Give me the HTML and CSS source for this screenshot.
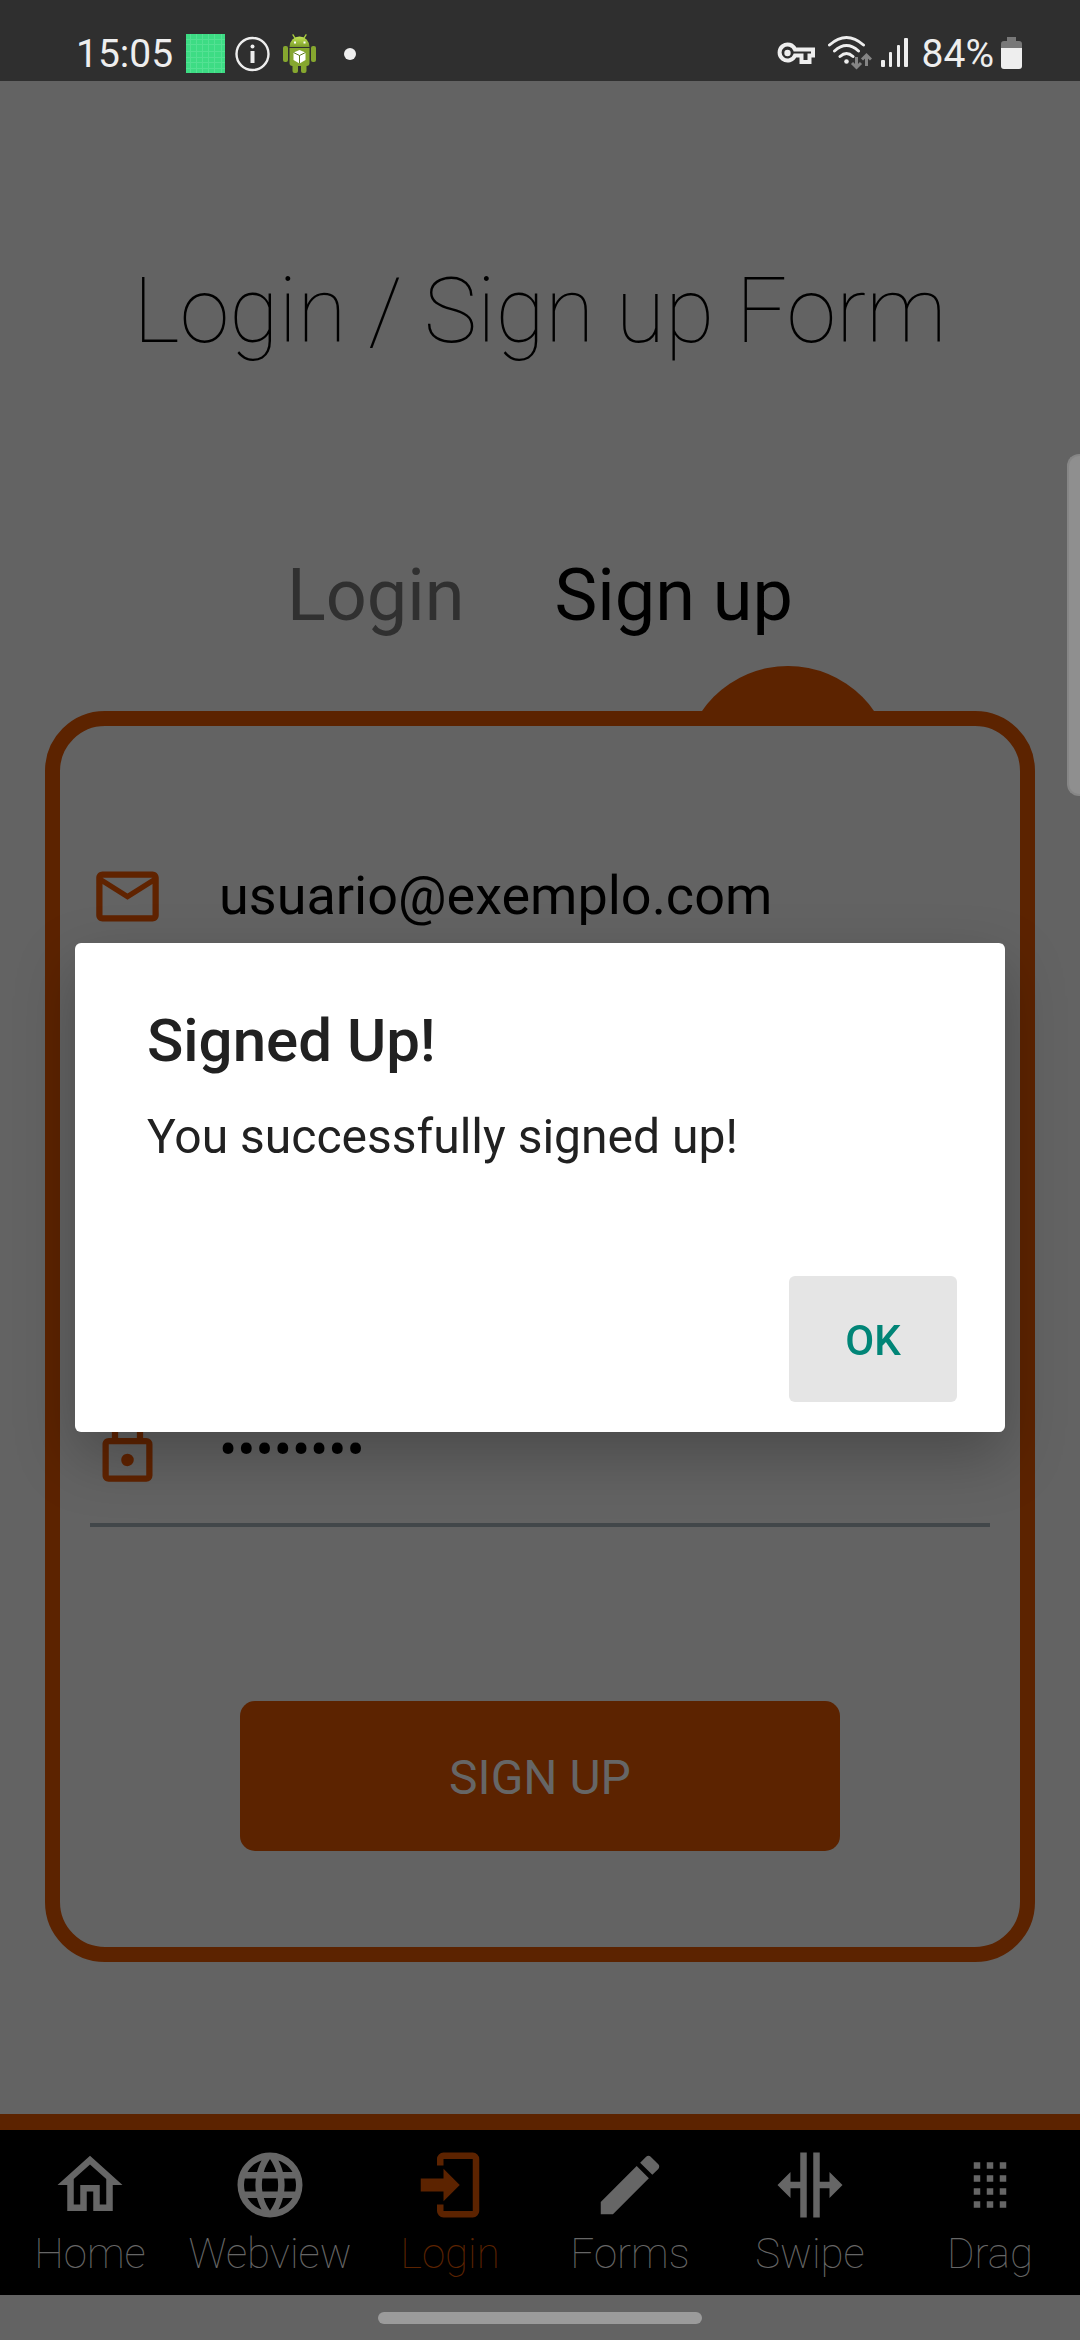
FILE: index.html
```html
<!DOCTYPE html>
<html lang="en">
<head>
<meta charset="utf-8">
<meta name="viewport" content="width=device-width, initial-scale=1">
<title>Login / Sign up Form</title>
<link rel="stylesheet" href="styles.css">
</head>
<body>
<header class="status">
  <div class="status-group">
    <span class="status-text">15:05</span>
    <div class="notices">
      <svg width="39" height="39" viewBox="0 0 39 39" aria-hidden="true">
        <path fill="#3ddc84" d="M0 0h39v39H0z"/>
        <path stroke="#6ae6a2" stroke-width="1" opacity=".5" d="M4.500 0v39M10.500 0v39M16.500 0v39M22.500 0v39M28.500 0v39M35.500 0v39M0 5.500h39M0 10.500h39M0 17.500h39M0 23.500h39M0 28.500h39M0 34.500h39"/>
      </svg>
      <svg width="39" height="39" viewBox="0 0 39 39" aria-hidden="true">
        <circle cx="19.500" cy="20" r="16" fill="none" stroke="#eee" stroke-width="2.400"/>
        <circle cx="19.500" cy="12.500" r="2" fill="#eee"/>
        <path fill="#eee" d="M17.500 17h4v12h-4z"/>
      </svg>
      <svg width="39" height="39" viewBox="0 0 39 39" aria-hidden="true">
        <defs>
          <linearGradient id="droid" x1="0" y1="0" x2="0" y2="1">
            <stop offset="0" stop-color="#c3e553"/><stop offset="1" stop-color="#7b9c2a"/>
          </linearGradient>
        </defs>
        <path stroke="#a9cf3e" stroke-width="1.300" stroke-linecap="round" d="M13 .8l2 3.400M26 .8l-2 3.400"/>
        <path fill="url(#droid)" d="M9.500 13a10 10.500 0 0 1 20 0z"/>
        <g fill="#86a72f">
          <rect x="3" y="12" width="5" height="16" rx="2"/>
          <rect x="31" y="12" width="5" height="16" rx="2"/>
          <rect x="12.500" y="29" width="5.500" height="10" rx="2"/>
          <rect x="21" y="29" width="5.500" height="10" rx="2"/>
          <path d="M9.500 14h20v15q0 3-3 3h-14q-3 0-3-3z"/>
        </g>
        <path fill="#fff" d="M14 7.500h2v2h-2zM23.500 7.500h2v2h-2z"/>
        <path fill="#fff" d="M19.500 16l6 2.500v7.500l-6 3.500-6-3.500v-7.500z"/>
        <path fill="none" stroke="#5d7a1e" stroke-width="1" d="M13.500 18.500l6 3 6-3M19.500 21.500v8"/>
      </svg>
    </div>
    <svg class="more" width="12" height="12" viewBox="0 0 12 12" aria-hidden="true"><circle cx="6" cy="6" r="6" fill="#eee"/></svg>
  </div>
  <div class="status-group status-end">
    <svg width="38" height="39" viewBox="0 0 38 39" aria-hidden="true">
      <path fill="none" stroke="#eee" stroke-width="4" d="M18 15.500H36v6H32.500v6.500H24.500v-6.500H18A8 8 0 1 1 18 15.500z"/>
      <circle cx="10.500" cy="19" r="3.200" fill="#eee"/>
    </svg>
    <svg class="wifi" width="44" height="39" viewBox="0 0 44 39" aria-hidden="true">
      <g fill="none" stroke="#eee" stroke-width="3" stroke-linecap="round">
        <path d="M1.500 11Q18.500-4 35.500 11M6.500 17Q18.500 6 30.500 17M12 22.500Q18.500 16.500 25 22.500"/>
      </g>
      <circle cx="18.500" cy="27.500" r="2.300" fill="#eee"/>
      <g fill="none" stroke="#858585" stroke-width="3">
        <path d="M28.500 23v10M24 29l4.500 4.500L33 29M38.500 32V21.500M34 25.500l4.500-4.500 4.500 4.500"/>
      </g>
    </svg>
    <svg width="27" height="39" viewBox="0 0 27 39" aria-hidden="true">
      <g fill="#eee">
        <rect y="26" width="4" height="7" rx="1"/><rect x="8" y="18" width="3" height="15" rx="1"/>
        <rect x="16" y="11" width="3" height="22" rx="1"/><rect x="23" y="4" width="4" height="29" rx="1"/>
      </g>
    </svg>
    <span class="status-text charge">84%</span>
    <svg width="21" height="39" viewBox="0 0 21 39" aria-hidden="true">
      <path fill="#787878" d="M6 3h9v4h3q3 0 3 3v5H0v-5q0-3 3-3h3z"/>
      <path fill="#eee" d="M0 14h21v18q0 3-3 3H3q-3 0-3-3z"/>
    </svg>
  </div>
</header>

<main class="screen">
  <h1 class="title">Login / Sign up Form</h1>
  <div class="modes">
    <button class="mode" type="button">Login</button>
    <button class="mode mode-active" type="button">Sign up</button>
  </div>
  <div class="panel">
    <form class="card">
      <div class="fields">
        <label class="field">
          <svg class="field-icon" viewBox="0 0 24 24" aria-hidden="true"><path d="M22 6C22 4.900 21.100 4 20 4H4C2.900 4 2 4.900 2 6V18C2 19.100 2.900 20 4 20H20C21.100 20 22 19.100 22 18V6M20 6L12 11L4 6H20M20 18H4V8L12 13L20 8V18Z"/></svg>
          <input class="input" type="email" aria-label="Email" value="usuario@exemplo.com">
        </label>
        <label class="field">
          <svg class="field-icon" viewBox="0 0 24 24" aria-hidden="true"><use href="#lock"/></svg>
          <input class="input" type="password" aria-label="Password" value="12345678">
        </label>
        <label class="field">
          <svg class="field-icon" viewBox="0 0 24 24" aria-hidden="true"><path id="lock" d="M12,17C10.890,17 10,16.100 10,15C10,13.890 10.890,13 12,13A2,2 0 0,1 14,15A2,2 0 0,1 12,17M18,20V10H6V20H18M18,8A2,2 0 0,1 20,10V20A2,2 0 0,1 18,22H6C4.890,22 4,21.100 4,20V10C4,8.890 4.890,8 6,8H7V6A5,5 0 0,1 12,1A5,5 0 0,1 17,6V8H18M12,3A3,3 0 0,0 9,6V8H15V6A3,3 0 0,0 12,3Z"/></svg>
          <input class="input" type="password" aria-label="Confirm password" value="12345678">
        </label>
      </div>
      <button class="submit" type="button">SIGN UP</button>
    </form>
  </div>
</main>

<nav class="tabs">
  <a class="tab" href="#home">
    <svg class="tab-icon" viewBox="0 0 24 24" aria-hidden="true"><path d="M12 5.690L17 10.190V18H15V12H9V18H7V10.190L12 5.690M12 3L2 12H5V20H11V14H13V20H19V12H22"/></svg>
    Home</a>
  <a class="tab" href="#webview">
    <svg class="tab-icon" viewBox="0 0 24 24" aria-hidden="true"><path d="M16.360,14C16.440,13.340 16.500,12.680 16.500,12C16.500,11.320 16.440,10.660 16.360,10H19.740C19.900,10.640 20,11.310 20,12C20,12.690 19.900,13.360 19.740,14M14.590,19.560C15.190,18.450 15.650,17.250 15.970,16H18.920C17.960,17.650 16.430,18.930 14.590,19.560M14.340,14H9.660C9.560,13.340 9.500,12.680 9.500,12C9.500,11.320 9.560,10.650 9.660,10H14.340C14.430,10.650 14.500,11.320 14.500,12C14.500,12.680 14.430,13.340 14.340,14M12,19.960C11.170,18.760 10.500,17.430 10.090,16H13.910C13.500,17.430 12.830,18.760 12,19.960M8,8H5.080C6.030,6.340 7.570,5.060 9.400,4.440C8.800,5.550 8.350,6.750 8,8M5.080,16H8C8.350,17.250 8.800,18.450 9.400,19.560C7.570,18.930 6.030,17.650 5.080,16M4.260,14C4.100,13.360 4,12.690 4,12C4,11.310 4.100,10.640 4.260,10H7.640C7.560,10.660 7.500,11.320 7.500,12C7.500,12.680 7.560,13.340 7.640,14M12,4.030C12.830,5.230 13.500,6.570 13.910,8H10.090C10.500,6.570 11.170,5.230 12,4.030M18.920,8H15.970C15.650,6.750 15.190,5.550 14.590,4.440C16.430,5.070 17.960,6.340 18.920,8M12,2C6.470,2 2,6.500 2,12A10,10 0 0,0 12,22A10,10 0 0,0 22,12A10,10 0 0,0 12,2Z"/></svg>
    Webview</a>
  <a class="tab tab-active" href="#login" aria-current="page">
    <svg class="tab-icon" viewBox="0 0 24 24" aria-hidden="true"><path d="M10,17V14H3V10H10V7L15,12L10,17M10,2H19A2,2 0 0,1 21,4V20A2,2 0 0,1 19,22H10A2,2 0 0,1 8,20V18H10V20H19V4H10V6H8V4A2,2 0 0,1 10,2Z"/></svg>
    Login</a>
  <a class="tab" href="#forms">
    <svg class="tab-icon" viewBox="0 0 24 24" aria-hidden="true"><path d="M20.710,7.040C21.100,6.650 21.100,6 20.710,5.630L18.370,3.290C18,2.900 17.350,2.900 16.960,3.290L15.120,5.120L18.870,8.870M3,17.250V21H6.750L17.810,9.930L14.060,6.180L3,17.250Z"/></svg>
    Forms</a>
  <a class="tab" href="#swipe">
    <svg class="tab-icon" viewBox="0 0 24 24" aria-hidden="true"><path d="M18,16V13H15V22H13V2H15V11H18V8L22,12L18,16M2,12L6,16V13H9V22H11V2H9V11H6V8L2,12Z"/></svg>
    Swipe</a>
  <a class="tab" href="#drag">
    <svg class="tab-icon" viewBox="0 0 24 24" aria-hidden="true"><path d="M7 5h2v2H7zM11 5h2v2h-2zM15 5h2v2h-2zM7 9h2v2H7zM11 9h2v2h-2zM15 9h2v2h-2zM7 13h2v2H7zM11 13h2v2h-2zM15 13h2v2h-2zM7 17h2v2H7zM11 17h2v2h-2zM15 17h2v2h-2z"/></svg>
    Drag</a>
</nav>
<footer class="gesture"><div class="gesture-pill"></div></footer>

<div class="edge-handle"></div>

<div class="overlay">
  <div class="dialog" role="alertdialog" aria-modal="true" aria-labelledby="dialog-title" aria-describedby="dialog-text">
    <h2 class="dialog-title" id="dialog-title">Signed Up!</h2>
    <p class="dialog-text" id="dialog-text">You successfully signed up!</p>
    <button class="dialog-ok" type="button">OK</button>
  </div>
</div>
</body>
</html>
```
FILE: styles.css
```css
:root {
  --page: #636363;
  --accent: #5c2300;
  --accent-icon: #602300;
  --muted: #666;
}

* { box-sizing: border-box; }

body {
  margin: 0;
  min-height: 100vh;
  display: flex;
  flex-direction: column;
  background: var(--page);
  color: #000;
  font-family: Roboto, "Liberation Sans", sans-serif;
}

svg { display: block; flex: none; }
button, input { font: inherit; border: 0; padding: 0; background: none; }

/* Status bar */
.status {
  height: 81px;
  padding: 26px 58px 0 76px;
  display: flex;
  justify-content: space-between;
  background: #2f2f2f;
}
.status-group { display: flex; align-items: center; }
.status-text { font-size: 39px; line-height: 48px; color: #eee; }
.notices { display: flex; gap: 8px; margin-left: 13px; }
.more { margin-left: 25px; }
.wifi { margin: 0 9px 0 13px; }
.charge { margin: 0 7px 0 14px; }

/* Form screen */
.screen {
  flex: 1;
  padding: 178px 45px 150px;
  display: flex;
  flex-direction: column;
}
.title {
  margin: 0;
  font-size: 90px;
  line-height: 106px;
  font-weight: 100;
  text-align: center;
}
.modes {
  display: flex;
  justify-content: center;
  gap: 90px;
  margin-top: 189px;
}
.mode { font-size: 72px; line-height: 84px; color: #303030; }
.mode-active { color: #000; }

.panel { position: relative; margin-top: 73px; }
/* Bump on the card's edge that marks the chosen mode */
.panel::before {
  content: "";
  position: absolute;
  top: -45px;
  right: 142px;
  width: 210px;
  height: 210px;
  border-radius: 50%;
  background: var(--accent);
}
.card {
  position: relative;
  display: flex;
  flex-direction: column;
  gap: 174px;
  padding: 97px 30px 96px;
  border: 15px solid var(--accent);
  border-radius: 60px;
  background: var(--page);
}
.fields { display: flex; flex-direction: column; gap: 127px; }
.field {
  display: flex;
  align-items: center;
  gap: 54px;
  height: 150px;
  border-bottom: 4px solid #42474a;
}
.field-icon { width: 75px; height: 75px; fill: var(--accent-icon); }
.input {
  flex: 1;
  min-width: 0;
  font-size: 54px;
  line-height: 64px;
  color: #000;
}
.submit {
  width: 600px;
  max-width: 100%;
  height: 150px;
  padding-top: 3px;
  align-self: center;
  border-radius: 15px;
  background: var(--accent);
  color: var(--muted);
  font-size: 48px;
}

/* Bottom navigation */
.tabs {
  display: grid;
  grid-template-columns: repeat(6, 1fr);
  padding: 16px 0 17px;
  border-top: 16px solid var(--accent);
  background: #000;
}
.tab {
  display: flex;
  flex-direction: column;
  align-items: center;
  gap: 5px;
  color: var(--muted);
  font-size: 42px;
  line-height: 49px;
  font-weight: 100;
  text-decoration: none;
}
.tab-active { color: var(--accent); }
.tab-icon { width: 78px; height: 78px; fill: currentColor; }

.gesture {
  height: 45px;
  padding-top: 17px;
  display: flex;
  justify-content: center;
}
.gesture-pill { width: 324px; height: 12px; border-radius: 6px; background: #9b9b9b; }

.edge-handle {
  position: absolute;
  top: 454px;
  right: 0;
  width: 13px;
  height: 342px;
  border: 2px solid #868686;
  border-right: 0;
  border-radius: 12px 0 0 12px;
  background: #8f8f8f;
}

/* Alert */
.overlay {
  position: fixed;
  inset: 81px 0 46px;
  display: flex;
  align-items: center;
  padding: 0 75px;
}
.dialog {
  flex: 1;
  display: flex;
  flex-direction: column;
  padding: 63px 48px 30px 72px;
  border-radius: 6px;
  background: #fff;
  color: #212121;
  box-shadow: 0 24px 60px rgba(0, 0, 0, .25);
}
.dialog-title { margin: 0; font-size: 60px; line-height: 70px; font-weight: 500; }
.dialog-text { margin: 33px 0 0; font-size: 48px; line-height: 56px; }
.dialog-ok {
  align-self: flex-end;
  width: 168px;
  height: 126px;
  margin-top: 111px;
  padding-top: 3px;
  border-radius: 6px;
  background: #e5e5e5;
  color: #018577;
  font-size: 42px;
  font-weight: 500;
}
```
